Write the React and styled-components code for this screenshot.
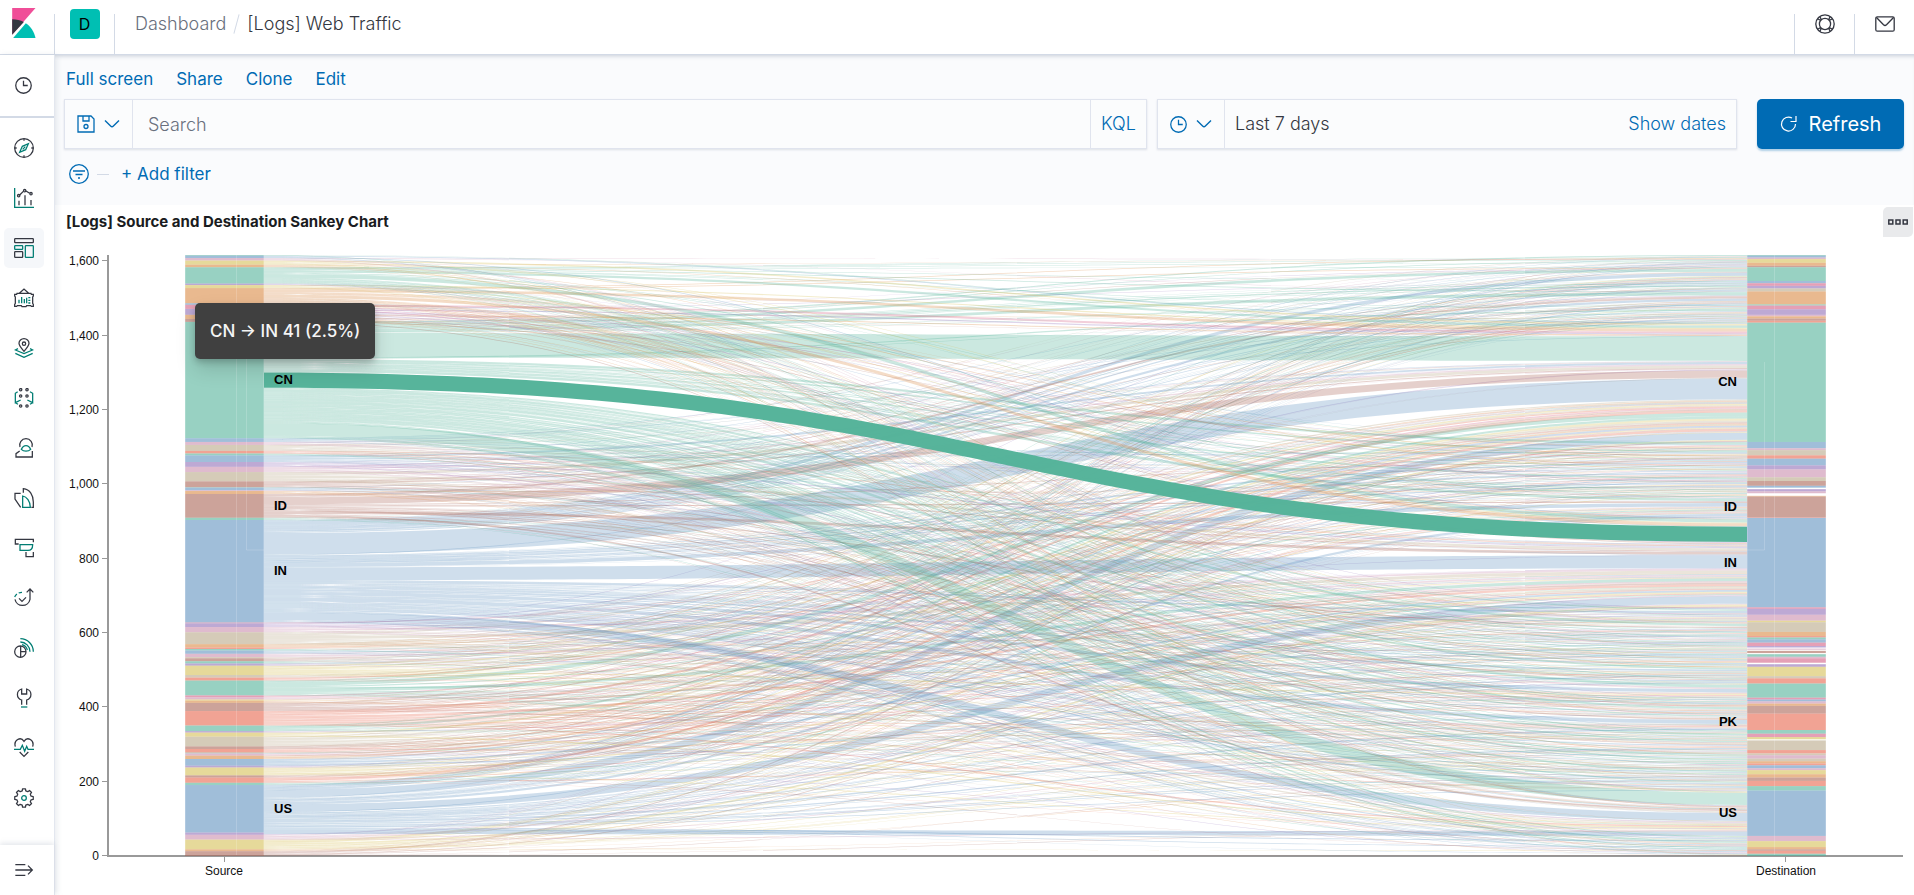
import React, { useLayoutEffect, useMemo, useRef, useState } from 'react';
import styled, { createGlobalStyle, css } from 'styled-components';

const color = {
  ink: '#343741',
  subdued: '#69707d',
  link: '#006bb4',
  accent: '#017d73',
  border: '#d3dae6',
  fieldBorder: '#e0e4ee',
  page: '#fafbfd',
  field: '#fbfcfd',
};

const GlobalStyle = createGlobalStyle`
  *, *::before, *::after { box-sizing: border-box; }
  body {
    margin: 0;
    background: #fff;
    color: ${color.ink};
    font-family: Inter, "Liberation Sans", sans-serif;
    font-size: 18px;
    font-weight: 300;
    line-height: 24px;
  }
  button, input { font: inherit; color: inherit; }
`;

/* ---------- page frame ---------- */

const Page = styled.div`
  display: flex;
  flex-direction: column;
  min-height: 100vh;
`;

const Header = styled.header`
  position: relative;
  z-index: 1;
  display: flex;
  align-items: flex-start;
  height: 55px;
  border-bottom: 1px solid ${color.border};
  background: #fff;
`;

const HeaderCell = styled.div`
  display: flex;
  align-items: center;
  justify-content: center;
  width: ${(p) => p.$width}px;
  height: 48px;
`;

const LogoCell = styled(HeaderCell)`
  justify-content: flex-start;
  padding: 0 0 2px 12px;
`;

const HeaderRule = styled.span`
  width: 1px;
  height: 40px;
  margin-top: 14px;
  background: ${color.border};
`;

const IconButton = styled.button`
  display: flex;
  align-items: center;
  justify-content: center;
  padding: 0;
  border: 0;
  background: none;
  cursor: pointer;
`;

const SpaceAvatar = styled.button`
  width: 30px;
  height: 30px;
  padding: 0;
  border: 0;
  border-radius: 4px;
  background: #00bfb3;
  color: #000;
  font-size: 16px;
  font-weight: 400;
  line-height: 30px;
`;

const Breadcrumbs = styled.nav`
  display: flex;
  flex: 1;
  align-items: center;
  height: 48px;
  padding-left: 20px;
`;

const Crumb = styled.a`
  color: ${(p) => (p.$current ? color.ink : color.subdued)};
  text-decoration: none;
`;

const CrumbSlash = styled.span`
  width: 1px;
  height: 20px;
  margin: 0 10px;
  background: ${color.border};
  transform: rotate(15deg);
`;

const Body = styled.div`
  display: flex;
  flex: 1;
`;

/* ---------- side navigation ---------- */

const Sidebar = styled.aside`
  position: relative;
  z-index: 1;
  display: flex;
  flex: none;
  flex-direction: column;
  width: 55px;
  border-right: 1px solid #e3e7ef;
  background: #fff;
  box-shadow: 2px 0 6px rgba(152, 162, 179, 0.2);
`;

const SideRecent = styled.div`
  display: flex;
  align-items: center;
  height: 63px;
  padding-left: 3px;
  border-bottom: 2px solid ${color.border};
`;

const SideList = styled.nav`
  display: flex;
  flex-direction: column;
  gap: 10px;
  padding: 10px 10px 10px 4px;
`;

const SideItem = styled(IconButton)`
  width: 40px;
  height: 40px;
  border-radius: 5px;
  background: ${(p) => (p.$active ? '#f5f7fa' : 'transparent')};
`;

const SideFooter = styled.div`
  display: flex;
  align-items: center;
  height: 50px;
  margin-top: auto;
  padding-left: 4px;
  box-shadow: 0 -2px 5px rgba(152, 162, 179, 0.25);
`;

/* ---------- toolbar ---------- */

const Main = styled.main`
  flex: 1;
  min-width: 0;
`;

const Toolbar = styled.div`
  padding: 0 10px 6px 9px;
  background: ${color.page};
  box-shadow: inset 0 4px 4px -3px rgba(152, 162, 179, 0.5);
`;

const Menu = styled.nav`
  display: flex;
  align-items: center;
  gap: 23px;
  height: 44px;
  padding: 4px 0 0 2px;
`;

const TextButton = styled.button`
  padding: 0;
  border: 0;
  background: none;
  color: ${color.link};
  white-space: nowrap;
  cursor: pointer;
`;

const ActionButton = styled(TextButton)`
  font-size: 17px;
  font-weight: 400;
`;

const QueryRow = styled.div`
  display: flex;
`;

const fieldBox = css`
  display: flex;
  height: 50px;
  border: 1px solid ${color.fieldBorder};
  background: ${color.field};
  box-shadow: 0 1px 2px rgba(152, 162, 179, 0.3);
`;

const SearchField = styled.div`
  ${fieldBox}
  flex: 1;
  min-width: 0;
  margin-right: 10px;
`;

const DateField = styled.div`
  ${fieldBox}
  width: 580px;
  margin-right: 20px;
`;

const FieldPrefix = styled(IconButton)`
  flex: none;
  gap: 9px;
  width: ${(p) => p.$width}px;
  border-right: 1px solid ${color.fieldBorder};
  color: ${color.link};
`;

const SearchInput = styled.input`
  flex: 1;
  min-width: 0;
  padding: 2px 15px 0;
  border: 0;
  outline: 0;
  background: transparent;
  &::placeholder { color: ${color.subdued}; opacity: 1; }
`;

const LanguageButton = styled(TextButton)`
  width: 56px;
  border-left: 1px solid ${color.fieldBorder};
`;

const RangeButton = styled(TextButton)`
  flex: 1;
  padding-left: 10px;
  color: ${color.ink};
  text-align: left;
`;

const ShowDates = styled(TextButton)`
  padding-right: 10px;
`;

const RefreshButton = styled.button`
  display: flex;
  align-items: center;
  justify-content: center;
  gap: 11px;
  width: 147px;
  height: 50px;
  border: 0;
  border-radius: 5px;
  background: #006bb4;
  box-shadow: 0 2px 2px rgba(0, 107, 180, 0.3);
  color: #fff;
  font-size: 20px;
  font-weight: 400;
  cursor: pointer;
`;

const FilterRow = styled.div`
  display: flex;
  align-items: center;
  height: 50px;
  padding-left: 5px;
  color: ${color.link};
`;

const FilterDash = styled.span`
  width: 12px;
  height: 1px;
  margin: 0 12px 0 8px;
  background: ${color.border};
`;

/* ---------- panel ---------- */

const Panel = styled.section`
  padding: 2px 0 0;
`;

const PanelHeader = styled.div`
  display: flex;
  align-items: center;
  justify-content: space-between;
  height: 30px;
  padding: 0 1px 0 11px;
`;

const PanelTitle = styled.h2`
  margin: 0;
  color: #1a1c21;
  font-size: 15px;
  font-weight: 700;
`;

const PanelMenu = styled(IconButton)`
  width: 30px;
  height: 30px;
  border-radius: 5px 0;
  background: #e9eaec;
`;

const ChartBox = styled.div`
  position: relative;
  height: 650px;
`;

const ChartSvg = styled.svg`
  display: block;
  width: 100%;
  height: 100%;
  font-family: "Liberation Sans", sans-serif;
  font-weight: 400;
`;

const AxisText = styled.text`
  fill: #111;
  font-size: 12px;
`;

const GroupText = styled.text`
  fill: #000;
  font-size: 13px;
  font-weight: 700;
`;

const Tooltip = styled.div`
  position: absolute;
  top: 66px;
  left: 140px;
  height: 56px;
  padding: 0 15px;
  border-radius: 5px;
  background: #404040;
  box-shadow: 0 10px 20px rgba(0, 0, 0, 0.15), 0 3px 6px rgba(0, 0, 0, 0.2);
  color: #f5f5f5;
  font-size: 17px;
  font-weight: 500;
  line-height: 56px;
  white-space: nowrap;
`;

/* ---------- icons ---------- */

const Glyph = ({ size = 20, box = 60, stroke = 3.8, children }) => (
  <svg
    width={size}
    height={size}
    viewBox={`0 0 ${box} ${box}`}
    fill="none"
    stroke="currentColor"
    strokeWidth={stroke}
    aria-hidden="true"
  >
    {children}
  </svg>
);

const Teal = ({ children }) => <g stroke={color.accent}>{children}</g>;

const gearPath = (() => {
  const pts = [];
  for (let i = 0; i < 8; i += 1) {
    [[-14, 22], [-9, 28], [9, 28], [14, 22]].forEach(([deg, r]) => {
      const a = ((i * 45 + deg) * Math.PI) / 180;
      pts.push(`${(30 + r * Math.sin(a)).toFixed(1)} ${(30 - r * Math.cos(a)).toFixed(1)}`);
    });
  }
  return `M${pts.join('L')}Z`;
})();

const appIcons = [
  ['Discover', (
    <>
      <circle cx="30" cy="30" r="28" />
      <path d="M30 2v6M30 52v6M2 30h6M52 30h6" />
      <Teal><path d="M43 17L35 35L17 43L25 25Z M26 34l8-8" /></Teal>
    </>
  )],
  ['Visualize', (
    <>
      <Teal><path d="M2 0V58H60" /></Teal>
      <path d="M15 38V52M33 22V52M51 36V52M17 21L28 10M36 9L47 16" />
      <circle cx="14" cy="23" r="3.5" /><circle cx="32" cy="8" r="3.5" /><circle cx="51" cy="17" r="3.5" />
    </>
  )],
  ['Dashboard', (
    <>
      <rect x="2" y="2" width="56" height="12" rx="2" />
      <rect x="2" y="41" width="24" height="17" rx="2" />
      <Teal><rect x="2" y="23" width="24" height="11" rx="2" /><rect x="34" y="23" width="24" height="35" rx="2" /></Teal>
    </>
  )],
  ['Canvas', (
    <>
      <path d="M9 16H51L52 19H58V24L56 27V46L58 49V55H52L50 53H38L36 56H24L22 53H10L8 55H2V49L4 46V27L2 24V19H8ZM16 16L30 3L44 16" />
      <Teal><path d="M15 35V46M23 27V46M31 33V46M38 29V46M43 29h6M43 37h6M43 45h6" /></Teal>
    </>
  )],
  ['Maps', (
    <>
      <path d="M30 40C20 29 15 23 15 16a15 14 0 0 1 30 0C45 23 40 29 30 40Z" />
      <circle cx="30" cy="17" r="5" />
      <Teal><path d="M12 32L4 36L30 47L56 36L48 32M4 46L30 58L56 46" /></Teal>
    </>
  )],
  ['Machine Learning', (
    <>
      <circle cx="20" cy="5" r="3.5" /><circle cx="39" cy="5" r="3.5" />
      <circle cx="20" cy="24" r="3.5" /><circle cx="39" cy="24" r="3.5" />
      <circle cx="20" cy="54" r="3.5" /><circle cx="39" cy="54" r="3.5" />
      <Teal><path d="M11 11L4 16V44L20 36M48 11L56 16V44L40 36M4 44L12 49M56 44L48 49" /></Teal>
    </>
  )],
  ['Metrics', (
    <>
      <path d="M18 27A19 19 0 1 1 54 27M17 39L6 47V57H55V39" />
      <Teal><path d="M22 34C29 19 43 19 50 34C43 41 29 41 22 34Z" /></Teal>
    </>
  )],
  ['Logs', (
    <>
      <path d="M20 16H3V33L20 58M28 14V2C48 4 58 22 58 42V58H52" />
      <Teal><path d="M26 58V24C38 26 49 40 49 58Z" /></Teal>
    </>
  )],
  ['APM', (
    <>
      <path d="M58 13V4H4V18H14M36 42V56H58V42" />
      <Teal><path d="M18 20H56C56 32 50 37 42 37H18Z" /></Teal>
    </>
  )],
  ['Uptime', (
    <>
      <path d="M3 34A23 23 0 0 0 48 34V4M38 13L48 3L58 13M15 31L24 40L36 28" />
      <Teal><path d="M2 27A24 24 0 0 1 24 13" strokeDasharray="11 6" /></Teal>
    </>
  )],
  ['SIEM', (
    <>
      <circle cx="19" cy="41" r="17" />
      <path d="M20 24V58M20 41H36" />
      <Teal><path d="M19 2A39 39 0 0 1 58 41M19 12A29 29 0 0 1 48 41M24 20A22 22 0 0 1 40 36" /></Teal>
    </>
  )],
  ['Dev Tools', (
    <>
      <path d="M23 50V36C6 30 6 8 23 3V18H38V3C55 8 55 30 38 36V50" />
      <Teal><path d="M21 57H40" /></Teal>
    </>
  )],
  ['Stack Monitoring', (
    <>
      <path d="M4 26C-2 6 20 -6 30 10C40 -6 62 6 56 26M17 42L30 55L43 42" />
      <Teal><path d="M0 34H19L25 22L32 40L38 25L42 34H60" /></Teal>
    </>
  )],
  ['Management', (
    <>
      <path d={gearPath} strokeLinejoin="round" />
      <Teal><circle cx="30" cy="30" r="7" /></Teal>
    </>
  )],
];

const ClockIcon = ({ size }) => (
  <Glyph size={size} box={16} stroke={1.2}>
    <circle cx="8" cy="8" r="7.3" />
    <path d="M8 3.5V8H12" />
  </Glyph>
);

const ChevronIcon = () => (
  <Glyph size={16} box={16} stroke={1.4}><path d="M1 4.5L6.6 10.1Q8 11.4 9.4 10.1L15 4.5" /></Glyph>
);

const SaveIcon = () => (
  <Glyph size={18} box={18} stroke={1.3}>
    <path d="M1 1H14L17 4V17H1ZM6 1V6H12V1" />
    <circle cx="9" cy="11.5" r="2" />
  </Glyph>
);

const FilterIcon = () => (
  <Glyph size={20} box={20} stroke={1.3}>
    <circle cx="10" cy="10" r="9.3" />
    <path d="M4 7H16M6.5 10.5H13.5M9 14H11" />
  </Glyph>
);

const RefreshIcon = () => (
  <Glyph size={18} box={18} stroke={1.2}>
    <path d="M15.5 9A7 7 0 1 1 12 3M16 1V6.5H10.5" />
  </Glyph>
);

const HelpIcon = () => (
  <Glyph size={20} box={20} stroke={1.3}>
    <circle cx="10" cy="10" r="9.2" />
    <circle cx="10" cy="10" r="5.6" />
    <path d="M2.6 4.8L6 6.6M4.8 2.6L6.6 6M17.4 4.8L14 6.6M15.2 2.6L13.4 6M2.6 15.2L6 13.4M4.8 17.4L6.6 14M17.4 15.2L14 13.4M15.2 17.4L13.4 14" />
  </Glyph>
);

const MailIcon = () => (
  <Glyph size={20} box={20} stroke={1.3}>
    <rect x="0.8" y="2.8" width="18.4" height="14.4" rx="1.5" />
    <path d="M1.5 3.5L8.5 10.8Q10 12.2 11.5 10.8L18.5 3.5" />
  </Glyph>
);

const CollapseIcon = () => (
  <Glyph size={20}><path d="M4 14H34M4 30H54M4 46H34M42 17L55 30L42 43" /></Glyph>
);

const DotsIcon = () => (
  <Glyph size={20} box={20} stroke={1.5}>
    <rect x="0.8" y="8" width="4" height="4" />
    <rect x="8" y="8" width="4" height="4" />
    <rect x="15.2" y="8" width="4" height="4" />
  </Glyph>
);

const KibanaLogo = () => (
  <svg width="24" height="30" viewBox="0 0 71 90" role="img" aria-label="Kibana">
    <path fill="#f04e98" d="M0 0H70L0 80Z" />
    <path fill="#343741" d="M0 34C13 34 25 37 35 42L0 80Z" />
    <path fill="#00bfb3" d="M41 46C56 56 66 72 70 90H3Z" />
  </svg>
);

/* ---------- sankey data ---------- */

const TOTAL = 1617;

const palette = {
  g: '#54b399', b: '#6092c0', k: '#d36086', p: '#9170b8', l: '#ca8eae',
  y: '#d6bf57', t: '#b9a888', o: '#da8b45', n: '#aa6556', r: '#e7664c', w: null,
};

const sourceNodes =
  'g2 b7 l8 y12 o8 g49 p5 y8 o46 b5 k12 p18 o12 n9 g350:CN b11 l9 t18 r8 g5 b21 p14 l16 t27 n18 g2 b7 l3 o8 n72:ID g7 b308:IN ' +
  'k2 p12 l15 t36 o10 r5 g4 b10 l10 t4 n8 g7 p7 y28 t8 r8 g45:NG k6 l6 y4 o7 n24 r44 g16 p5 y12 t29 n8 r11 g3 l6 o10 b20 p6 y24 n6 r16 g7 b143:US ' +
  'p6 l15 y29 o6 n14';

const destinationNodes =
  'g2 b6 l4 y11 o9 n5 g41 b7 k8 p7 t9 o39 g4 k11 p17 l4 o7 n7 r5 g359:CN b19 l5 t16 r10 b20 p12 l23 t12 n14 b6 w4 p7 l6 w7 o3 n61:ID r2 b269:IN ' +
  'k5 p18 l17 y5 t29 o12 r5 g5 b10 k10 p5 w3 l4 w3 n7 w3 g8 l4 k14 w4 p8 y28 t6 r16 g42 k6 b6 l6 o7 n23 r50:PK g11 k10 y6 w4 t29 r10 t5 l10 t8 o7 r6 b9 l5 y12 o11 n10 r15 g13 b137:US ' +
  'l15 y18 o7 n4 r9 g7';

function parseNodes(spec) {
  const raw = spec.split(' ').map((item) => {
    const [head, name] = item.split(':');
    return { hue: palette[head[0]], size: Number(head.slice(1)), name };
  });
  const sum = raw.reduce((s, n) => s + n.size, 0);
  let cursor = 0;
  return raw.map((n) => {
    const start = Math.round((cursor / sum) * TOTAL);
    cursor += n.size;
    return { ...n, start, end: Math.round((cursor / sum) * TOTAL) };
  });
}

/* from, to, first unit at the source, first unit at the destination, units */
const majorFlows = [
  ['CN', 'CN', 210, 219, 66],
  ['CN', 'IN', 316, 731, 41],
  ['CN', 'US', 453, 1447, 33],
  ['ID', 'CN', 652, 311, 19],
  ['ID', 'IN', 690, 799, 7],
  ['ID', 'US', 699, 1492, 4],
  ['IN', 'CN', 748, 332, 57],
  ['IN', 'IN', 840, 808, 35],
  ['IN', 'US', 962, 1502, 21],
  ['NG', 'CN', 1150, 424, 10],
  ['NG', 'IN', 1166, 870, 8],
  ['US', 'CN', 1440, 478, 19],
  ['US', 'IN', 1478, 918, 20],
  ['US', 'US', 1546, 1551, 12],
];

function seededRandom(seed) {
  let s = seed;
  return () => {
    s = (s * 1664525 + 1013904223) % 4294967296;
    return s / 4294967296;
  };
}

function buildFlows() {
  const src = parseNodes(sourceNodes);
  const dst = parseNodes(destinationNodes);
  const unitOwner = (nodes) => {
    const owner = new Array(TOTAL);
    nodes.forEach((n, i) => owner.fill(i, n.start, n.end));
    return owner;
  };
  const srcOwner = unitOwner(src);
  const dstOwner = unitOwner(dst);
  const srcUsed = new Set();
  const dstUsed = new Set();
  const blocked = new Set();

  const flows = majorFlows.map(([from, to, s, d, units]) => {
    for (let i = 0; i < units; i += 1) {
      srcUsed.add(s + i);
      dstUsed.add(d + i);
    }
    blocked.add(`${from}>${to}`);
    return {
      s, d, units,
      hue: src[srcOwner[s]].hue,
      active: from === 'CN' && to === 'IN',
    };
  });

  const free = (used) => Array.from({ length: TOTAL }, (_, i) => i).filter((i) => !used.has(i));
  const left = free(srcUsed);
  const right = free(dstUsed);
  const size = left.length;
  const random = seededRandom(41);
  const order = right.map((unit) => dstOwner[unit]);
  for (let i = size - 1; i > 0; i -= 1) {
    const j = Math.floor(random() * (i + 1));
    [order[i], order[j]] = [order[j], order[i]];
  }
  const isBlocked = (i, owner) => blocked.has(`${src[srcOwner[left[i]]].name}>${dst[owner].name}`);
  for (let pass = 0; pass < 30; pass += 1) {
    for (let i = 0; i < size; i += 1) {
      if (isBlocked(i, order[i])) {
        const j = Math.floor(random() * size);
        if (!isBlocked(i, order[j]) && !isBlocked(j, order[i])) {
          [order[i], order[j]] = [order[j], order[i]];
        }
      }
    }
  }
  const pairs = order
    .map((to, i) => ({ from: srcOwner[left[i]], to }))
    .sort((a, b) => a.from - b.from || a.to - b.to);
  pairs.forEach((p, i) => { p.s = left[i]; });
  [...pairs]
    .sort((a, b) => a.to - b.to || a.from - b.from)
    .forEach((p, i) => { p.d = right[i]; });

  let last = null;
  pairs.forEach((p) => {
    const joins = last && last.from === p.from && last.to === p.to &&
      p.s === last.s + last.units && p.d === last.d + last.units;
    if (joins) {
      last.units += 1;
    } else {
      last = { ...p, units: 1, hue: src[p.from].hue };
      flows.push(last);
    }
  });
  flows.sort((a, b) => Number(!!a.active) - Number(!!b.active) || b.s - a.s);
  return { src, dst, flows };
}

/* ---------- sankey chart ---------- */

const TOP = 18;
const BASE = 619;
const AXIS_X = 53;
const NODE_INSET = 77;
const NODE_WIDTH = 79;
const UNIT = (BASE - TOP) / TOTAL;
const yOf = (unit) => TOP + unit * UNIT;

function useWidth(ref) {
  const [width, setWidth] = useState(0);
  useLayoutEffect(() => {
    const measure = () => setWidth(ref.current.clientWidth);
    measure();
    const observer = new ResizeObserver(measure);
    observer.observe(ref.current);
    return () => observer.disconnect();
  }, [ref]);
  return width;
}

function flowPath(flow, x0, x1) {
  const mid = (x0 + x1) / 2;
  const a0 = yOf(flow.s).toFixed(2);
  const b0 = yOf(flow.d).toFixed(2);
  const a1 = yOf(flow.s + flow.units).toFixed(2);
  const b1 = yOf(flow.d + flow.units).toFixed(2);
  return `M${x0} ${a0}C${mid} ${a0} ${mid} ${b0} ${x1} ${b0}V${b1}C${mid} ${b1} ${mid} ${a1} ${x0} ${a1}Z`;
}

const NodeColumn = ({ nodes, x }) => (
  <g>
    {nodes.map((n) => n.hue && (
      <rect
        key={n.start}
        x={x}
        y={yOf(n.start)}
        width={NODE_WIDTH}
        height={(n.end - n.start) * UNIT}
        fill={n.hue}
        fillOpacity="0.6"
      />
    ))}
  </g>
);

function SankeyChart() {
  const box = useRef(null);
  const width = useWidth(box);
  const { src, dst, flows } = useMemo(buildFlows, []);
  const right = width - 11;
  const srcX = AXIS_X + NODE_INSET;
  const dstX = right - NODE_INSET - NODE_WIDTH;
  const linkX = srcX + NODE_WIDTH;
  const middle = (n) => yOf((n.start + n.end) / 2) + 4;
  const ticks = [0, 200, 400, 600, 800, 1000, 1200, 1400, 1600];

  return (
    <ChartBox ref={box}>
      {width > 0 && (
        <ChartSvg role="img" aria-label="Source and destination traffic">
          <g stroke="#999">
            <path strokeWidth="2" d={`M${AXIS_X} ${TOP}V${BASE}H${right}`} fill="none" />
            {ticks.map((t) => (
              <path key={t} d={`M${AXIS_X - 6} ${Math.round(yOf(TOTAL - t)) - 0.5}H${AXIS_X}`} />
            ))}
            <path d={`M${srcX + 39.5} ${BASE}v6M${dstX + 38.5} ${BASE}v6`} />
          </g>
          {ticks.map((t) => (
            <AxisText key={t} x={AXIS_X - 9} y={yOf(TOTAL - t) + 4} textAnchor="end">
              {t.toLocaleString('en-US')}
            </AxisText>
          ))}
          <AxisText x={srcX + 39} y={BASE + 19} textAnchor="middle">Source</AxisText>
          <AxisText x={dstX + 39} y={BASE + 19} textAnchor="middle">Destination</AxisText>

          {flows.map((f) => (
            <path
              key={`${f.s}-${f.d}`}
              d={flowPath(f, linkX, dstX)}
              fill={f.hue}
              fillOpacity={f.active ? 0.98 : 0.3}
            />
          ))}
          <NodeColumn nodes={src} x={srcX} />
          <NodeColumn nodes={dst} x={dstX} />
          <g stroke="#fff" strokeOpacity="0.18" fill="none">
            <path d={`M${srcX + 51.5} ${TOP}V${BASE - 1}M${srcX + 61.5} 100V313H${linkX}`} />
            <path d={`M${dstX + 27.5} ${TOP}V${BASE - 1}M${dstX + 17.5} 125V313H${dstX}`} />
            <path d={`M${srcX + 0.5} ${TOP}V${BASE - 1}M${linkX - 0.5} ${TOP}V${BASE - 1}M${dstX + 0.5} ${TOP}V${BASE - 1}M${dstX + NODE_WIDTH - 0.5} ${TOP}V${BASE - 1}`} />
          </g>
          {src.filter((n) => n.name && n.name !== 'NG').map((n) => (
            <GroupText key={n.name} x={linkX + 10} y={middle(n)}>{n.name}</GroupText>
          ))}
          {dst.filter((n) => n.name).map((n) => (
            <GroupText key={n.name} x={dstX - 10} y={middle(n)} textAnchor="end">{n.name}</GroupText>
          ))}
        </ChartSvg>
      )}
      <Tooltip role="tooltip">CN → IN 41 (2.5%)</Tooltip>
    </ChartBox>
  );
}

/* ---------- app ---------- */

const menuItems = ['Full screen', 'Share', 'Clone', 'Edit'];

export default function App() {
  return (
    <Page>
      <GlobalStyle />
      <Header>
        <LogoCell $width={54}><KibanaLogo /></LogoCell>
        <HeaderRule />
        <HeaderCell $width={59}><SpaceAvatar>D</SpaceAvatar></HeaderCell>
        <HeaderRule />
        <Breadcrumbs aria-label="Breadcrumbs">
          <Crumb href="#dashboards">Dashboard</Crumb>
          <CrumbSlash />
          <Crumb href="#web-traffic" $current>[Logs] Web Traffic</Crumb>
        </Breadcrumbs>
        <HeaderRule />
        <HeaderCell $width={59}><IconButton aria-label="Help"><HelpIcon /></IconButton></HeaderCell>
        <HeaderRule />
        <HeaderCell $width={59}><IconButton aria-label="News"><MailIcon /></IconButton></HeaderCell>
      </Header>
      <Body>
        <Sidebar>
          <SideRecent>
            <SideItem aria-label="Recently viewed"><ClockIcon size={17} /></SideItem>
          </SideRecent>
          <SideList aria-label="Applications">
            {appIcons.map(([name, drawing]) => (
              <SideItem key={name} aria-label={name} $active={name === 'Dashboard'}>
                <Glyph>{drawing}</Glyph>
              </SideItem>
            ))}
          </SideList>
          <SideFooter>
            <SideItem aria-label="Expand navigation"><CollapseIcon /></SideItem>
          </SideFooter>
        </Sidebar>
        <Main>
          <Toolbar>
            <Menu>
              {menuItems.map((item) => <ActionButton key={item}>{item}</ActionButton>)}
            </Menu>
            <QueryRow>
              <SearchField>
                <FieldPrefix $width={68} aria-label="Saved queries"><SaveIcon /><ChevronIcon /></FieldPrefix>
                <SearchInput type="text" placeholder="Search" aria-label="Search" />
                <LanguageButton>KQL</LanguageButton>
              </SearchField>
              <DateField>
                <FieldPrefix $width={67} aria-label="Quick date ranges"><ClockIcon size={17} /><ChevronIcon /></FieldPrefix>
                <RangeButton>Last 7 days</RangeButton>
                <ShowDates>Show dates</ShowDates>
              </DateField>
              <RefreshButton><RefreshIcon />Refresh</RefreshButton>
            </QueryRow>
            <FilterRow>
              <IconButton aria-label="Filter options"><FilterIcon /></IconButton>
              <FilterDash />
              <ActionButton>+ Add filter</ActionButton>
            </FilterRow>
          </Toolbar>
          <Panel>
            <PanelHeader>
              <PanelTitle>[Logs] Source and Destination Sankey Chart</PanelTitle>
              <PanelMenu aria-label="Panel options"><DotsIcon /></PanelMenu>
            </PanelHeader>
            <SankeyChart />
          </Panel>
        </Main>
      </Body>
    </Page>
  );
}
